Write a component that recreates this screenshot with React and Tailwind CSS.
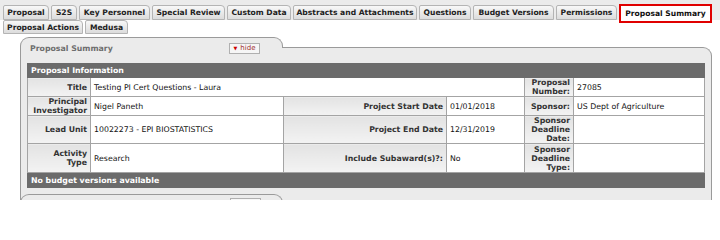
const topTabs = [
  { label: 'Proposal', w: 'w-[46px]' },
  { label: 'S2S', w: 'w-[26px]' },
  { label: 'Key Personnel', w: 'w-[71px]' },
  { label: 'Special Review', w: 'w-[73px]' },
  { label: 'Custom Data', w: 'w-[64px]' },
  { label: 'Abstracts and Attachments', w: 'w-[124px]' },
  { label: 'Questions', w: 'w-[52px]' },
  { label: 'Budget Versions', w: 'w-[81px]' },
  { label: 'Permissions', w: 'w-[61px]' },
];

const lowerTabs = [
  { label: 'Proposal Actions', w: 'w-[80px]' },
  { label: 'Medusa', w: 'w-[43px]' },
];

const tabCls =
  'shrink-0 min-w-0 h-[14px] flex items-center justify-center whitespace-nowrap border border-[#b4b4b4] rounded-tl-[2px] rounded-tr-[4px] bg-gradient-to-b from-[#f8f8f8] to-[#dcdcdc] font-bold text-[#222] text-[7.6px]';

const lbl =
  'border border-[#a4a4a4] bg-gradient-to-b from-[#e3e3e3] to-[#f3f3f3] px-[3px] text-right font-bold text-[#333] align-middle';
const val = 'border border-[#a4a4a4] bg-white px-[3px] text-[#111] align-middle';

function HideButton() {
  return (
    <div className="w-[31px] h-[11px] flex items-center justify-center gap-[3px] border border-[#b0b0b0] bg-[#f6f6f6] text-[#a03030] text-[7px] leading-none">
      <span className="text-[5px] text-[#c00]">▼</span>
      <span>hide</span>
    </div>
  );
}

export default function App() {
  return (
    <div className="w-[720px] h-[200px] overflow-hidden bg-white font-['DejaVu_Sans',Verdana,sans-serif] text-[7.8px] leading-[9px]">
      <div className="h-[20px] bg-[#ebebeb] flex items-end gap-[2px] pl-[3px]">
        {topTabs.map((t) => (
          <div key={t.label} className={`${tabCls} ${t.w} h-[15px]`}>
            {t.label}
          </div>
        ))}
        <div className="relative z-10 shrink-0 self-start mt-[4px] w-[93px] h-[19px] flex items-center justify-center border-2 border-[#e00000] bg-white font-bold text-[#111] text-[7.6px] whitespace-nowrap">
          Proposal Summary
        </div>
      </div>
      <div className="flex gap-[2px] pl-[3px]">
        {lowerTabs.map((t) => (
          <div key={t.label} className={`${tabCls} ${t.w}`}>
            {t.label}
          </div>
        ))}
      </div>

      <div className="ml-[20px] mt-[3px] w-[692px]">
        <div className="relative z-10 -mb-px w-[263px] h-[11px] border-t border-x border-[#9a9a9a] rounded-t-[9px] bg-[#ebebeb]" />
        <div className="border-t border-x border-[#9a9a9a] rounded-tr-[9px] bg-[#ebebeb] pl-[6px] pr-[7px] h-[160px]">
          <div className="relative z-20 -mt-[8px] h-[16px] flex items-center">
            <div className="w-[202px] pl-[3px] font-bold text-[#6e6e6e]">Proposal Summary</div>
            <HideButton />
          </div>
          <table className="mt-[7px] w-[677px] table-fixed border-collapse">
            <colgroup>
              <col className="w-[63px]" />
              <col className="w-[193px]" />
              <col className="w-[163px]" />
              <col className="w-[78px]" />
              <col className="w-[49px]" />
              <col className="w-[131px]" />
            </colgroup>
            <tbody>
              <tr className="h-[14px]">
                <td colSpan={6} className="bg-[#6b6b6b] px-[3px] font-bold text-white border border-[#6b6b6b]">
                  Proposal Information
                </td>
              </tr>
              <tr className="h-[19px]">
                <td className={lbl}>Title</td>
                <td colSpan={3} className={val}>Testing PI Cert Questions - Laura</td>
                <td className={lbl}>Proposal Number:</td>
                <td className={val}>27085</td>
              </tr>
              <tr className="h-[19px]">
                <td className={lbl}>Principal Investigator</td>
                <td className={val}>Nigel Paneth</td>
                <td className={lbl}>Project Start Date</td>
                <td className={val}>01/01/2018</td>
                <td className={lbl}>Sponsor:</td>
                <td className={val}>US Dept of Agriculture</td>
              </tr>
              <tr className="h-[28px]">
                <td className={lbl}>Lead Unit</td>
                <td className={val}>10022273 - EPI BIOSTATISTICS</td>
                <td className={lbl}>Project End Date</td>
                <td className={val}>12/31/2019</td>
                <td className={lbl}>Sponsor Deadline Date:</td>
                <td className={val}></td>
              </tr>
              <tr className="h-[29px]">
                <td className={lbl}>
                  Activity
                  <br />
                  Type
                </td>
                <td className={val}>Research</td>
                <td className={lbl}>Include Subaward(s)?:</td>
                <td className={val}>No</td>
                <td className={lbl}>Sponsor Deadline Type:</td>
                <td className={val}></td>
              </tr>
              <tr className="h-[15px]">
                <td colSpan={6} className="bg-[#6b6b6b] px-[3px] font-bold text-white border border-[#6b6b6b]">
                  No budget versions available
                </td>
              </tr>
            </tbody>
          </table>
          {/* next panel, only its top edge shows */}
          <div className="mt-[6px] -ml-[7px] w-[263px] h-[12px] border-t border-x border-[#9a9a9a] rounded-t-[9px] flex items-start pt-[3px] pl-[209px]">
            <div className="w-[31px] h-[11px] border border-[#b0b0b0] bg-[#f6f6f6]" />
          </div>
        </div>
      </div>
    </div>
  );
}
